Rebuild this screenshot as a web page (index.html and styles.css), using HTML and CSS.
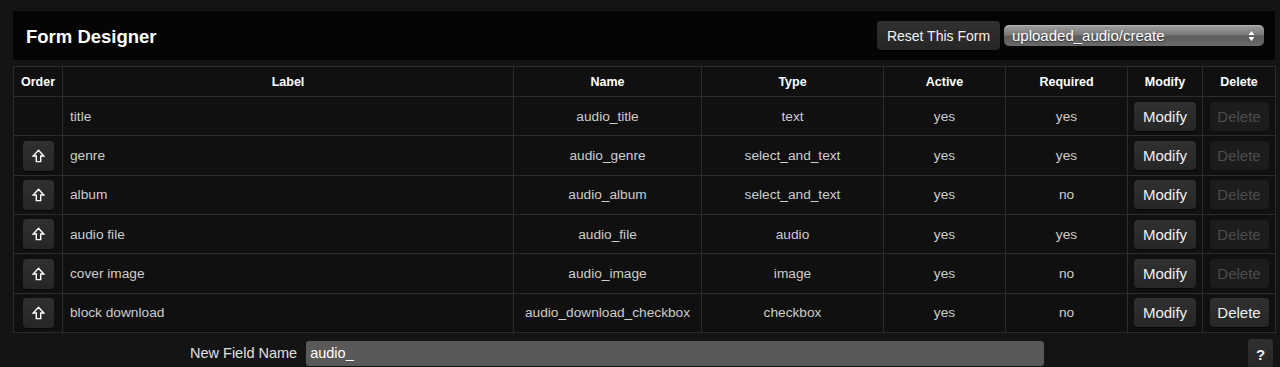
FILE: index.html
```html
<!DOCTYPE html>
<html>
<head>
<meta charset="utf-8">
<title>Form Designer</title>
<link rel="stylesheet" href="styles.css">
</head>
<body>
<div class="page">
  <div class="topbar">
    <h1 class="title">Form Designer</h1>
    <div class="top-actions">
      <button class="btn btn-reset">Reset This Form</button>
      <div class="select">
        <span class="select-text">uploaded_audio/create</span>
        <svg class="select-arrows" width="7" height="12" viewBox="0 0 7 12"><path d="M3.5 1 L6.5 5 H0.5 Z M3.5 11 L6.5 7 H0.5 Z" fill="#fff"/></svg>
      </div>
    </div>
  </div>

  <table class="fields">
    <colgroup>
      <col class="c-order"><col class="c-label"><col class="c-name"><col class="c-type">
      <col class="c-active"><col class="c-req"><col class="c-mod"><col class="c-del">
    </colgroup>
    <thead>
      <tr><th>Order</th><th>Label</th><th>Name</th><th>Type</th><th>Active</th><th>Required</th><th>Modify</th><th>Delete</th></tr>
    </thead>
    <tbody>
      <tr>
        <td></td><td class="label">title</td><td>audio_title</td><td>text</td><td>yes</td><td>yes</td>
        <td><button class="btn btn-row">Modify</button></td><td><button class="btn btn-row btn-del" disabled>Delete</button></td>
      </tr>
      <tr>
        <td><button class="btn btn-up"><svg width="13" height="14" viewBox="0 0 13 14"><path d="M6.5 1.2 L11.8 7 H8.7 V12.6 H4.3 V7 H1.2 Z" fill="none" stroke="#fff" stroke-width="1.4"/></svg></button></td>
        <td class="label">genre</td><td>audio_genre</td><td>select_and_text</td><td>yes</td><td>yes</td>
        <td><button class="btn btn-row">Modify</button></td><td><button class="btn btn-row btn-del" disabled>Delete</button></td>
      </tr>
      <tr>
        <td><button class="btn btn-up"><svg width="13" height="14" viewBox="0 0 13 14"><path d="M6.5 1.2 L11.8 7 H8.7 V12.6 H4.3 V7 H1.2 Z" fill="none" stroke="#fff" stroke-width="1.4"/></svg></button></td>
        <td class="label">album</td><td>audio_album</td><td>select_and_text</td><td>yes</td><td>no</td>
        <td><button class="btn btn-row">Modify</button></td><td><button class="btn btn-row btn-del" disabled>Delete</button></td>
      </tr>
      <tr>
        <td><button class="btn btn-up"><svg width="13" height="14" viewBox="0 0 13 14"><path d="M6.5 1.2 L11.8 7 H8.7 V12.6 H4.3 V7 H1.2 Z" fill="none" stroke="#fff" stroke-width="1.4"/></svg></button></td>
        <td class="label">audio file</td><td>audio_file</td><td>audio</td><td>yes</td><td>yes</td>
        <td><button class="btn btn-row">Modify</button></td><td><button class="btn btn-row btn-del" disabled>Delete</button></td>
      </tr>
      <tr>
        <td><button class="btn btn-up"><svg width="13" height="14" viewBox="0 0 13 14"><path d="M6.5 1.2 L11.8 7 H8.7 V12.6 H4.3 V7 H1.2 Z" fill="none" stroke="#fff" stroke-width="1.4"/></svg></button></td>
        <td class="label">cover image</td><td>audio_image</td><td>image</td><td>yes</td><td>no</td>
        <td><button class="btn btn-row">Modify</button></td><td><button class="btn btn-row btn-del" disabled>Delete</button></td>
      </tr>
      <tr>
        <td><button class="btn btn-up"><svg width="13" height="14" viewBox="0 0 13 14"><path d="M6.5 1.2 L11.8 7 H8.7 V12.6 H4.3 V7 H1.2 Z" fill="none" stroke="#fff" stroke-width="1.4"/></svg></button></td>
        <td class="label">block download</td><td>audio_download_checkbox</td><td>checkbox</td><td>yes</td><td>no</td>
        <td><button class="btn btn-row">Modify</button></td><td><button class="btn btn-row">Delete</button></td>
      </tr>
    </tbody>
  </table>

  <div class="newfield">
    <label class="nf-label">New Field Name</label>
    <div class="nf-input">audio_</div>
    <button class="btn btn-help">?</button>
  </div>
</div>
</body>
</html>
```

FILE: styles.css
```css
html, body {
  margin: 0;
  padding: 0;
  background: #141414;
  height: 367px;
  overflow: hidden;
}
body {
  font-family: "Liberation Sans", Arial, Helvetica, sans-serif;
  color: #cfcfcf;
}
.page {
  padding: 11px 5px 0 13px;
}
.topbar {
  background: #050505;
  height: 49px;
  display: flex;
  align-items: center;
  justify-content: space-between;
  padding: 0 11px 0 13px;
}
.title {
  margin: 0;
  font-size: 18.5px;
  font-weight: bold;
  color: #fff;
  position: relative;
  top: 1px;
}
.top-actions {
  display: flex;
  align-items: center;
  gap: 4px;
}
.btn {
  font-family: "Liberation Sans", Arial, Helvetica, sans-serif;
  border: none;
  border-radius: 4px;
  background: linear-gradient(#303030, #262626);
  color: #f0f0f0;
  box-shadow: 0 1px 1px rgba(0,0,0,0.6);
  padding: 0;
  cursor: pointer;
}
.btn-reset {
  width: 123px;
  height: 29px;
  font-size: 14px;
  color: #f2f2f2;
}
.select {
  width: 260px;
  height: 21px;
  border-radius: 5px;
  background: linear-gradient(#a0a0a0 0%, #7a7a7a 45%, #5c5c5c 55%, #6a6a6a 100%);
  display: flex;
  align-items: center;
  justify-content: space-between;
  padding: 0 9px 0 8px;
  box-sizing: border-box;
  box-shadow: inset 0 1px 0 rgba(255,255,255,0.25);
}
.select-text {
  font-size: 15px;
  color: #fff;
  text-shadow: 0 1px 1px rgba(0,0,0,0.5);
}
.select-arrows {
  display: block;
}
.fields {
  margin-top: 6px;
  width: 1262px;
  border-collapse: collapse;
  table-layout: fixed;
  background: #101010;
}
.c-order { width: 49px; }
.c-label { width: 451px; }
.c-name { width: 188px; }
.c-type { width: 182px; }
.c-active { width: 122px; }
.c-req { width: 122px; }
.c-mod { width: 75px; }
.c-del { width: 73px; }
.fields th, .fields td {
  border: 1px solid #2c2c2c;
  text-align: center;
  padding: 0;
}
.fields th {
  height: 29px;
  font-size: 12.5px;
  font-weight: bold;
  color: #fff;
}
.fields td {
  height: 38.35px;
  font-size: 13.7px;
  color: #cdcdcd;
}
.fields td.label {
  text-align: left;
  padding-left: 7px;
}
.btn-row {
  height: 29px;
  font-size: 15px;
  vertical-align: middle;
}
.fields td:nth-child(7) .btn-row { width: 62px; }
.fields td:nth-child(8) .btn-row { width: 59px; }
.btn-del[disabled] {
  background: #1c1c1c;
  color: #4c4c4c;
  box-shadow: none;
}
.btn-up {
  width: 31px;
  height: 30px;
  display: inline-flex;
  align-items: center;
  justify-content: center;
  vertical-align: middle;
}
.btn-up svg { display: block; }
.newfield {
  display: flex;
  align-items: flex-start;
  margin-top: 8px;
  padding-left: 177px;
  padding-right: 2px;
}
.nf-label {
  font-size: 14.5px;
  color: #e0e0e0;
  margin-right: 9px;
  line-height: 25px;
}
.nf-input {
  width: 738px;
  height: 25px;
  box-sizing: border-box;
  background: #595959;
  border-radius: 3px;
  font-size: 14.5px;
  color: #fff;
  padding: 0 4px;
  line-height: 25px;
}
.btn-help {
  margin-left: auto;
  width: 25px;
  height: 30px;
  font-size: 15px;
  font-weight: bold;
  position: relative;
  top: -2px;
}
```
